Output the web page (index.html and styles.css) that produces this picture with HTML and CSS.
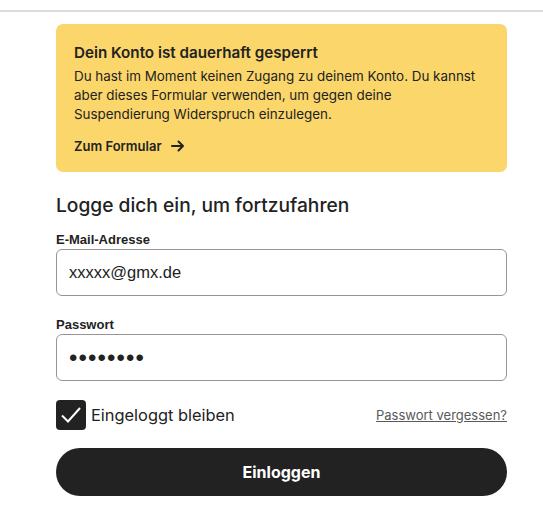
FILE: index.html
```html
<!DOCTYPE html>
<html lang="de">
<head>
<meta charset="utf-8">
<link rel="stylesheet" href="styles.css">
</head>
<body>
<div class="topbar"></div>
<main class="wrap">
  <section class="alert">
    <h2 class="alert-title">Dein Konto ist dauerhaft gesperrt</h2>
    <p class="alert-text">Du hast im Moment keinen Zugang zu deinem Konto. Du kannst aber dieses Formular verwenden, um gegen deine Suspendierung Widerspruch einzulegen.</p>
    <a class="alert-link" href="#">Zum Formular
      <svg width="14" height="12" viewBox="0 0 14 12" aria-hidden="true"><path d="M1 6h11M7.5 1.5 12 6l-4.5 4.5" fill="none" stroke="#222" stroke-width="2" stroke-linecap="round" stroke-linejoin="round"/></svg>
    </a>
  </section>
  <h1 class="title">Logge dich ein, um fortzufahren</h1>
  <label class="label" for="email">E-Mail-Adresse</label>
  <div class="input"><span>xxxxx@gmx.de</span></div>
  <label class="label label-pw" for="pw">Passwort</label>
  <div class="input"><span class="dots">••••••••</span></div>
  <div class="row">
    <div class="check-wrap">
      <span class="check"><svg width="22" height="18" viewBox="0 0 22 18"><path d="M2 9.5 8 15.5 20 2" fill="none" stroke="#fff" stroke-width="2"/></svg></span>
      <span class="check-label">Eingeloggt bleiben</span>
    </div>
    <a class="forgot" href="#">Passwort vergessen?</a>
  </div>
  <button class="btn">Einloggen</button>
</main>
</body>
</html>
```
FILE: styles.css
```css
* { box-sizing: border-box; }
body { margin: 0; background: #fff; color: #222; font-family: "Liberation Sans", Arial, sans-serif; }
.topbar { height: 12px; border-bottom: 2px solid #dcdcdc; }
.wrap { width: 451px; margin-left: 56px; padding-top: 12px; display: flex; flex-direction: column; }
.alert { background: #fbd66a; border-radius: 7px; padding: 19px 18px 18px 18px; height: 148px; }
.alert-title { margin: 0; font-family: Inter, sans-serif; font-size: 15.2px; font-weight: 600; line-height: 20px; color: #222; }
.alert-text { margin: 4px 0 0; max-width: 405px; font-family: Inter, sans-serif; font-size: 13.4px; line-height: 19px; color: #222; }
.alert-link { display: inline-flex; align-items: center; gap: 9px; margin-top: 14px; font-family: Inter, sans-serif; font-size: 13px; font-weight: 600; color: #222; text-decoration: none; }
.title { margin: 20px 0 0; font-family: Inter, sans-serif; font-size: 19.2px; font-weight: 500; line-height: 26px; color: #222; }
.label { display: block; margin-top: 14px; font-size: 13px; font-weight: 700; line-height: 16px; color: #222; }
.label-pw { margin-top: 21px; }
.input { margin-top: 1px; height: 47px; border: 1px solid #959595; border-radius: 6px; display: flex; align-items: center; padding-left: 12px; font-size: 16.5px; color: #222; }
.dots { font-size: 24px; letter-spacing: 1.1px; color: #222; line-height: 1; }
.row { margin-top: 19px; display: flex; align-items: center; justify-content: space-between; }
.check-wrap { display: flex; align-items: center; gap: 5px; }
.check { width: 30px; height: 30px; background: #222; border-radius: 4px; display: flex; align-items: center; justify-content: center; }
.check-label { font-family: Inter, sans-serif; font-size: 16.4px; color: #222; }
.forgot { font-family: Inter, sans-serif; font-size: 13px; color: #595959; text-decoration: underline; }
.btn { margin-top: 18px; height: 48px; border: 0; border-radius: 24px; background: #222; color: #fff; font-family: Inter, sans-serif; font-size: 16px; font-weight: 700; width: 100%; }
```
